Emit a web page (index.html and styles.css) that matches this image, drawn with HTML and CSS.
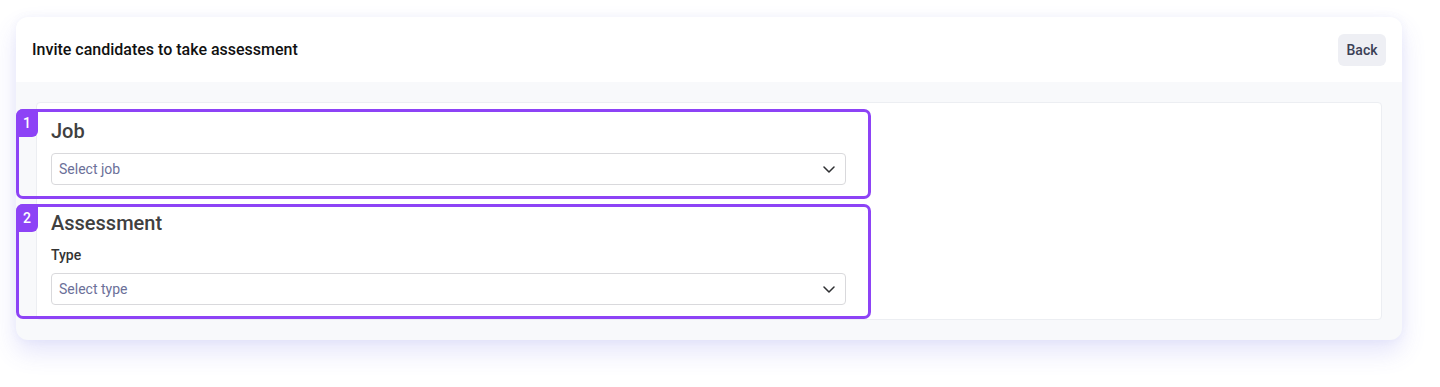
FILE: index.html
```html
<!DOCTYPE html>
<html lang="en">
<head>
<meta charset="utf-8">
<title>Invite candidates</title>
<link rel="stylesheet" href="styles.css">
</head>
<body>
<div class="page">
  <div class="card">
    <div class="card-header">
      <h1 class="title">Invite candidates to take assessment</h1>
      <button class="btn-back" type="button">Back</button>
    </div>
    <div class="card-body">
      <div class="panel">
        <div class="form">
          <section class="section section-job">
            <span class="tour-box" aria-hidden="true"></span>
            <span class="tour-badge">1</span>
            <h2 class="section-title">Job</h2>
            <div class="select">
              <span class="placeholder">Select job</span>
              <svg class="chev" width="12" height="7" viewBox="0 0 12 7"><path d="M1 1l5 5 5-5" fill="none" stroke="#2f3033" stroke-width="1.5" stroke-linecap="round" stroke-linejoin="round"/></svg>
            </div>
          </section>
          <section class="section section-assess">
            <span class="tour-box" aria-hidden="true"></span>
            <span class="tour-badge">2</span>
            <h2 class="section-title">Assessment</h2>
            <label class="field-label">Type</label>
            <div class="select">
              <span class="placeholder">Select type</span>
              <svg class="chev" width="12" height="7" viewBox="0 0 12 7"><path d="M1 1l5 5 5-5" fill="none" stroke="#2f3033" stroke-width="1.5" stroke-linecap="round" stroke-linejoin="round"/></svg>
            </div>
          </section>
        </div>
      </div>
    </div>
  </div>
</div>
</body>
</html>
```

FILE: styles.css
```css
* { box-sizing: border-box; }
html, body { margin: 0; padding: 0; background: #ffffff; }
body {
  font-family: Roboto, "Liberation Sans", Arial, sans-serif;
  color: #111;
}
.page {
  padding: 17px 38px 47px 16px;
}
.card {
  width: 1386px;
  border-radius: 12px;
  background: #f8f9fb;
  box-shadow: 0 12px 24px rgba(92, 96, 230, 0.16), 0 0 8px rgba(92, 96, 200, 0.06);
}
.card-header {
  height: 65px;
  background: #ffffff;
  border-radius: 12px 12px 0 0;
  display: flex;
  align-items: center;
  justify-content: space-between;
  padding: 0 16px;
}
.title {
  margin: 0;
  font-size: 16px;
  font-weight: 500;
  color: #111111;
  line-height: 22px;
}
.btn-back {
  font-family: inherit;
  height: 32px;
  width: 48px;
  border: 0;
  border-radius: 6px;
  background: #eeeff4;
  color: #3b4056;
  font-size: 14px;
  font-weight: 500;
  padding: 0;
}
.card-body {
  padding: 20px;
}
.panel {
  background: #ffffff;
  border: 1px solid #eceef2;
  border-radius: 4px;
  padding: 14px 14px 14px 14px;
}
.form {
  width: 795px;
  display: flex;
  flex-direction: column;
  gap: 24px;
}
.section {
  position: relative;
  display: flex;
  flex-direction: column;
}
.section-title {
  margin: 0 0 8px;
  font-size: 20px;
  font-weight: 500;
  color: #404040;
  line-height: 28px;
}
.field-label {
  font-size: 14px;
  font-weight: 500;
  color: #333333;
  line-height: 20px;
  margin-bottom: 8px;
}
.select {
  height: 32px;
  border: 1px solid #d9d9dc;
  border-radius: 4px;
  background: #fff;
  display: flex;
  align-items: center;
  justify-content: space-between;
  padding: 0 10px 0 7px;
}
.placeholder {
  font-size: 14px;
  color: #6b7099;
}
.chev { display: block; }
.tour-box {
  position: absolute;
  left: -35px;
  right: -25px;
  border: 3px solid #8d43f6;
  border-radius: 7px;
  pointer-events: none;
}
.section-job .tour-box { top: -8px; bottom: -14px; }
.section-assess .tour-box { top: -5px; bottom: -14px; }
.tour-badge {
  position: absolute;
  left: -35px;
  width: 22px;
  height: 28px;
  background: #8d43f6;
  color: #fff;
  font-size: 14px;
  font-weight: 500;
  display: flex;
  align-items: center;
  justify-content: center;
  border-radius: 7px 0 6px 0;
}
.section-job .tour-badge { top: -8px; }
.section-assess .tour-badge { top: -5px; }
```
